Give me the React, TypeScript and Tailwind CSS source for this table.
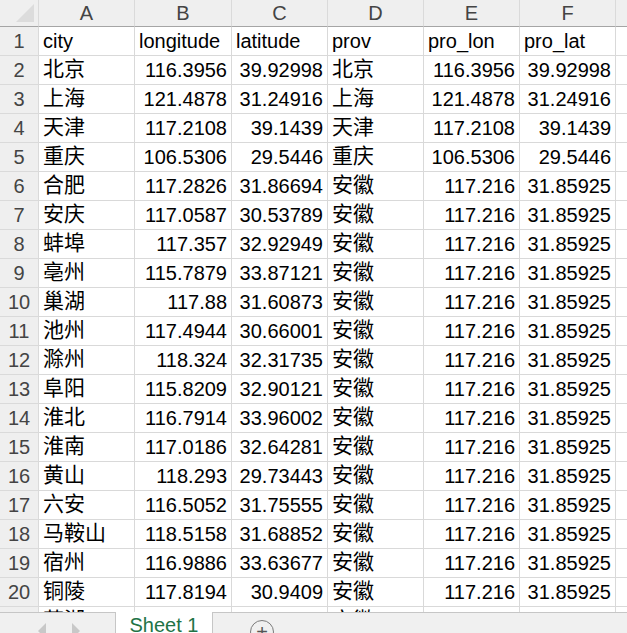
type Row = [string, string, string, string, string, string];

const rows: Row[] = [
  ['北京', '116.3956', '39.92998', '北京', '116.3956', '39.92998'],
  ['上海', '121.4878', '31.24916', '上海', '121.4878', '31.24916'],
  ['天津', '117.2108', '39.1439', '天津', '117.2108', '39.1439'],
  ['重庆', '106.5306', '29.5446', '重庆', '106.5306', '29.5446'],
  ['合肥', '117.2826', '31.86694', '安徽', '117.216', '31.85925'],
  ['安庆', '117.0587', '30.53789', '安徽', '117.216', '31.85925'],
  ['蚌埠', '117.357', '32.92949', '安徽', '117.216', '31.85925'],
  ['亳州', '115.7879', '33.87121', '安徽', '117.216', '31.85925'],
  ['巢湖', '117.88', '31.60873', '安徽', '117.216', '31.85925'],
  ['池州', '117.4944', '30.66001', '安徽', '117.216', '31.85925'],
  ['滁州', '118.324', '32.31735', '安徽', '117.216', '31.85925'],
  ['阜阳', '115.8209', '32.90121', '安徽', '117.216', '31.85925'],
  ['淮北', '116.7914', '33.96002', '安徽', '117.216', '31.85925'],
  ['淮南', '117.0186', '32.64281', '安徽', '117.216', '31.85925'],
  ['黄山', '118.293', '29.73443', '安徽', '117.216', '31.85925'],
  ['六安', '116.5052', '31.75555', '安徽', '117.216', '31.85925'],
  ['马鞍山', '118.5158', '31.68852', '安徽', '117.216', '31.85925'],
  ['宿州', '116.9886', '33.63677', '安徽', '117.216', '31.85925'],
  ['铜陵', '117.8194', '30.9409', '安徽', '117.216', '31.85925'],
  ['芜湖', '118.3841', '31.36602', '安徽', '117.216', '31.85925'],
];

const header = ['city', 'longitude', 'latitude', 'prov', 'pro_lon', 'pro_lat'];
const letters = ['A', 'B', 'C', 'D', 'E', 'F'];
const cols = 'grid-cols-[39px_96px_97px_96px_96px_96px_96px_1fr]';
const font = { fontFamily: '"Liberation Sans", "Noto Sans CJK SC", sans-serif' };

function Cell({ value, numeric, cjk }: { value: string; numeric?: boolean; cjk?: boolean }) {
  return (
    <div
      className={`h-[29px] border-r border-b border-[#d9d9d9] bg-white flex items-end pb-[3px] overflow-visible whitespace-nowrap ${
        numeric ? 'justify-end pr-[4px]' : 'pl-[4px]'
      }`}
    >
      <span className={cjk ? 'text-[21px] leading-[24px] text-black' : 'text-[20px] leading-[22px] text-black'}>{value}</span>
    </div>
  );
}

export default function App() {
  return (
    <div className="w-[627px] h-[633px] overflow-hidden bg-white flex flex-col" style={font}>
      <div className="flex-1 overflow-hidden">
        <div className={`grid ${cols}`}>
          <div className="h-[27px] bg-[#efefef] border-r border-b border-r-[#dadada] border-b-[#a5a5a5] relative">
            <div className="absolute right-[4px] bottom-[4px] w-0 h-0 border-l-[18px] border-l-transparent border-b-[18px] border-b-[#dcdcdc]" />
          </div>
          {letters.map((l) => (
            <div
              key={l}
              className="h-[27px] bg-[#efefef] border-r border-b border-r-[#dadada] border-b-[#a5a5a5] flex items-center justify-center text-[20px] text-[#444444]"
            >
              {l}
            </div>
          ))}
          <div className="h-[27px] bg-[#efefef] border-b border-b-[#a5a5a5]" />

          <div className="h-[29px] bg-[#efefef] border-r border-b border-[#dadada] flex items-end justify-center pb-[3px] text-[20px] leading-[22px] text-[#444444]">
            1
          </div>
          {header.map((h) => (
            <Cell key={h} value={h} />
          ))}
          <div className="h-[29px] border-b border-[#d9d9d9]" />

          {rows.map((r, i) => (
            <div key={i} className="contents">
              <div className="h-[29px] bg-[#efefef] border-r border-b border-[#dadada] flex items-end justify-center pb-[3px] text-[20px] leading-[22px] text-[#444444]">
                {i + 2}
              </div>
              <Cell value={r[0]} cjk />
              <Cell value={r[1]} numeric />
              <Cell value={r[2]} numeric />
              <Cell value={r[3]} cjk />
              <Cell value={r[4]} numeric />
              <Cell value={r[5]} numeric />
              <div className="h-[29px] border-b border-[#d9d9d9]" />
            </div>
          ))}
        </div>
      </div>

      <div className="h-[21px] shrink-0 flex bg-[#f0f0f0]">
        <div className="w-[116px] border-t border-r border-[#c6c6c6] flex items-end justify-center gap-[26px] pl-[2px] pb-0">
          <div className="w-0 h-0 border-y-[8px] border-y-transparent border-r-[8px] border-r-[#c8c8c8] translate-y-[6px]" />
          <div className="w-0 h-0 border-y-[8px] border-y-transparent border-l-[8px] border-l-[#c8c8c8] translate-y-[6px]" />
        </div>
        <div className="w-[97px] bg-white border-r border-[#c6c6c6] flex items-start justify-center pt-[2px] text-[20px] leading-[22px] text-[#217346]">
          Sheet 1
        </div>
        <div className="flex-1 border-t border-[#c6c6c6] flex items-start pl-[37px]">
          <div className="mt-[7px] w-[24px] h-[24px] shrink-0 rounded-full border-[1.5px] border-[#7a7a7a] flex items-center justify-center text-[#555] text-[20px] leading-none">
            +
          </div>
        </div>
      </div>
    </div>
  );
}
